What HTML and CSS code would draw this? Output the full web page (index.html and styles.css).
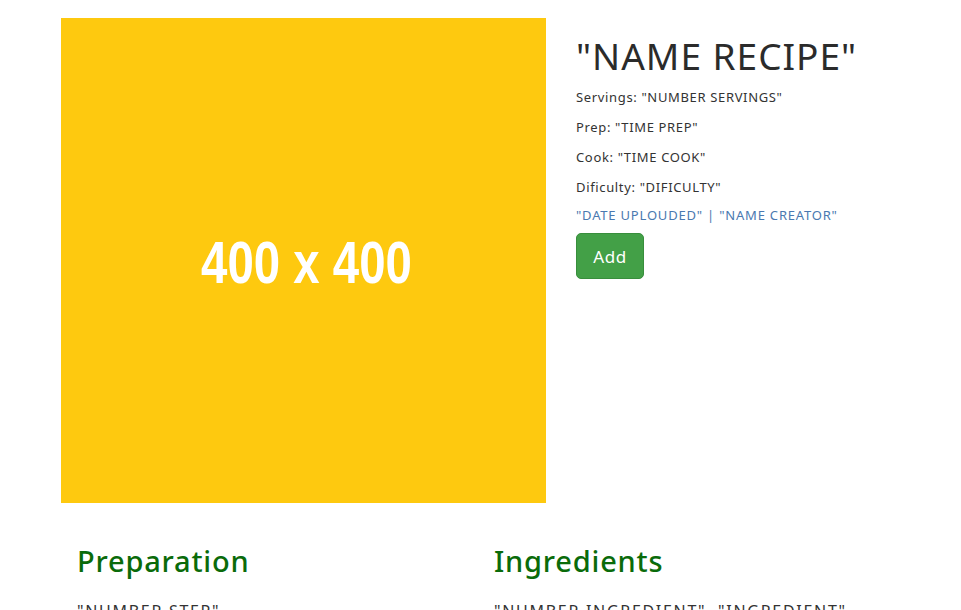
FILE: index.html
```html
<!DOCTYPE html>
<html lang="en">
<head>
<meta charset="utf-8">
<title>Recipe</title>
<link rel="stylesheet" href="styles.css">
</head>
<body>
<main class="page">
  <section class="top">
    <div class="photo"><span class="photo-label">400 x 400</span></div>
    <div class="info">
      <h1 class="title">"NAME RECIPE"</h1>
      <p class="meta">Servings: "NUMBER SERVINGS"</p>
      <p class="meta">Prep: "TIME PREP"</p>
      <p class="meta">Cook: "TIME COOK"</p>
      <p class="meta">Dificulty: "DIFICULTY"</p>
      <p class="byline">"DATE UPLOUDED" | "NAME CREATOR"</p>
      <button class="btn-add" type="button">Add</button>
    </div>
  </section>
  <section class="bottom">
    <div class="col">
      <h2 class="section-title">Preparation</h2>
      <p class="item">"NUMBER STEP"</p>
    </div>
    <div class="col">
      <h2 class="section-title">Ingredients</h2>
      <p class="item">"NUMBER INGREDIENT", "INGREDIENT"</p>
    </div>
  </section>
</main>
</body>
</html>
```

FILE: styles.css
```css
html, body {
  margin: 0;
  padding: 0;
  background: #ffffff;
}
body {
  font-family: "Noto Sans", "Open Sans", sans-serif;
  color: #333333;
  overflow: hidden;
}
.page {
  width: 834px;
  margin-left: 61px;
  padding-top: 18px;
}
.top {
  display: flex;
  gap: 30px;
  align-items: flex-start;
}
.photo {
  width: 485px;
  height: 485px;
  background: #fec90f;
  display: flex;
  align-items: center;
  justify-content: center;
  flex-shrink: 0;
}
.photo-label {
  font-family: "Liberation Sans", Arial, sans-serif;
  font-weight: bold;
  font-size: 60px;
  color: #ffffff;
  transform: scaleX(0.79);
  display: inline-block;
  margin-top: 4px;
  margin-left: 5px;
}
.info {
  display: flex;
  flex-direction: column;
  align-items: flex-start;
}
.title {
  margin: 18px 0 13px;
  font-size: 37px;
  font-weight: 400;
  line-height: 40px;
  letter-spacing: 1px;
  color: #2b2b2b;
}
.meta {
  margin: 0 0 14px;
  font-size: 13px;
  line-height: 16px;
  letter-spacing: 0.65px;
}
.byline {
  margin: -2px 0 10px;
  font-size: 13px;
  line-height: 16px;
  letter-spacing: 0.8px;
  color: #4a79b0;
}
.btn-add {
  font-family: "Noto Sans", "Open Sans", sans-serif;
  font-size: 17px;
  letter-spacing: 0.5px;
  color: #ffffff;
  background: #43a047;
  border: 1px solid #388e3c;
  border-radius: 5px;
  width: 68px;
  height: 46px;
  padding: 0;
}
.bottom {
  display: grid;
  grid-template-columns: 417px 417px;
  margin-top: 40px;
}
.col {
  padding: 0 16px;
}
.section-title {
  margin: 0 0 22px;
  font-size: 29px;
  font-weight: 500;
  line-height: 36px;
  letter-spacing: 0.8px;
  color: #0a6b0a;
}
.item {
  margin: 0;
  font-size: 16px;
  line-height: 20px;
  letter-spacing: 1.7px;
}
```
